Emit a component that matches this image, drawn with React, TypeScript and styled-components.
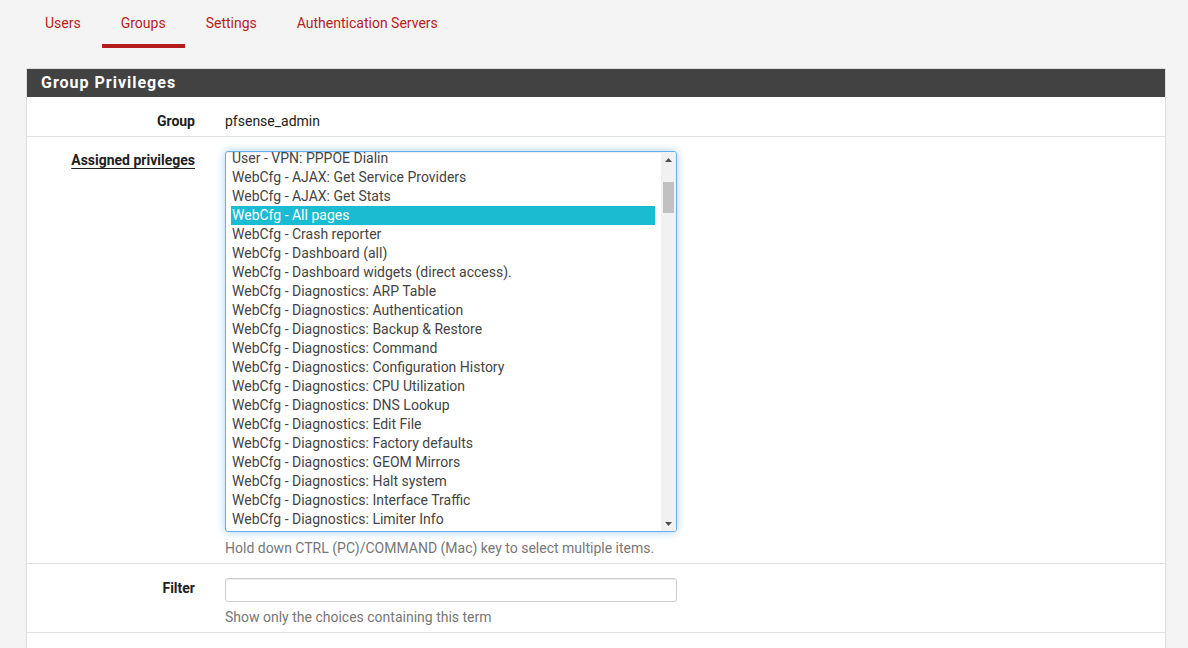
import React from "react";
import styled, { createGlobalStyle } from "styled-components";

const Global = createGlobalStyle`
  html, body { margin: 0; padding: 0; background: #f4f4f4; }
  body { font-family: Roboto, "Liberation Sans", sans-serif; font-size: 14px; color: #212121; }
  * { box-sizing: border-box; }
`;

const Page = styled.div`
  padding: 0 22px 0 26px;
  width: 1188px;
  height: 648px;
  overflow: hidden;
`;

const Tabs = styled.ul`
  display: flex;
  list-style: none;
  margin: 0;
  padding: 0;
  gap: 2px;
`;

const Tab = styled.li<{ $active?: boolean }>`
  padding: 13px 19px 0;
  height: 48px;
  line-height: 20px;
  color: #b71c1c;
  font-size: 14px;
  border-bottom: 4px solid ${(p) => (p.$active ? "#b71c1c" : "transparent")};
`;

const Panel = styled.section`
  margin-top: 20px;
  width: 1140px;
  background: #fff;
  border: 1px solid #dddddd;
  padding-bottom: 40px;
`;

const PanelHeading = styled.h2`
  margin: 0;
  height: 28px;
  background: #424242;
  color: #fff;
  font-size: 16px;
  font-weight: 700;
  letter-spacing: 1px;
  line-height: 28px;
  padding-left: 14px;
`;

const Row = styled.div`
  display: grid;
  grid-template-columns: 168px 452px;
  column-gap: 30px;
  padding: 14px 0 5px;
  border-bottom: 1px solid #e0e0e0;
`;

const Label = styled.div<{ $underline?: boolean }>`
  text-align: right;
  font-weight: 700;
  line-height: 20px;
  color: #212121;
  text-decoration: ${(p) => (p.$underline ? "underline" : "none")};
  text-underline-offset: 3px;
  margin-top: ${(p) => (p.$underline ? "-1px" : "0")};
`;

const Value = styled.div`
  line-height: 20px;
  color: #212121;
`;

const Help = styled.div<{ $gap: number }>`
  margin-top: ${(p) => p.$gap}px;
  line-height: 20px;
  color: #777;
`;

const ListBox = styled.div`
  display: flex;
  height: 381px;
  border: 1px solid #66afe9;
  border-radius: 3px;
  box-shadow: inset 0 1px 1px rgba(0, 0, 0, 0.075), 0 0 8px rgba(102, 175, 233, 0.6);
  overflow: hidden;
  background: #fff;
`;

const Options = styled.div`
  flex: 1;
  overflow: hidden;
  padding: 0 6px 0 5px;
`;

const OptionsInner = styled.div`
  margin-top: -3px;
`;

const Option = styled.div<{ $selected?: boolean }>`
  height: 19px;
  line-height: 19px;
  padding-left: 1px;
  white-space: nowrap;
  color: ${(p) => (p.$selected ? "#fff" : "#444")};
  background: ${(p) => (p.$selected ? "#1bbbd2" : "transparent")};
`;

const ScrollBar = styled.div`
  width: 15px;
  background: #f1f1f1;
  display: flex;
  flex-direction: column;
`;

const ArrowBtn = styled.div`
  height: 15px;
  display: flex;
  align-items: center;
  justify-content: center;
`;

const Track = styled.div`
  flex: 1;
  padding: 15px 2px 0;
`;

const Thumb = styled.div`
  height: 31px;
  background: #c1c1c1;
`;

const FilterInput = styled.input`
  display: block;
  width: 452px;
  height: 24px;
  border: 1px solid #ccc;
  border-radius: 3px;
  background: #fff;
  box-shadow: inset 0 1px 1px rgba(0, 0, 0, 0.075);
  outline: none;
  font: inherit;
`;

const options = [
  "User - VPN: PPPOE Dialin",
  "WebCfg - AJAX: Get Service Providers",
  "WebCfg - AJAX: Get Stats",
  "WebCfg - All pages",
  "WebCfg - Crash reporter",
  "WebCfg - Dashboard (all)",
  "WebCfg - Dashboard widgets (direct access).",
  "WebCfg - Diagnostics: ARP Table",
  "WebCfg - Diagnostics: Authentication",
  "WebCfg - Diagnostics: Backup & Restore",
  "WebCfg - Diagnostics: Command",
  "WebCfg - Diagnostics: Configuration History",
  "WebCfg - Diagnostics: CPU Utilization",
  "WebCfg - Diagnostics: DNS Lookup",
  "WebCfg - Diagnostics: Edit File",
  "WebCfg - Diagnostics: Factory defaults",
  "WebCfg - Diagnostics: GEOM Mirrors",
  "WebCfg - Diagnostics: Halt system",
  "WebCfg - Diagnostics: Interface Traffic",
  "WebCfg - Diagnostics: Limiter Info",
];

const Arrow = ({ up }: { up?: boolean }) => (
  <svg width="7" height="4" viewBox="0 0 7 4">
    <path d={up ? "M0 4 L3.5 0 L7 4 Z" : "M0 0 L7 0 L3.5 4 Z"} fill="#505050" />
  </svg>
);

export default function App() {
  return (
    <>
      <Global />
      <Page>
        <Tabs>
          <Tab>Users</Tab>
          <Tab $active>Groups</Tab>
          <Tab>Settings</Tab>
          <Tab>Authentication Servers</Tab>
        </Tabs>
        <Panel>
          <PanelHeading>Group Privileges</PanelHeading>
          <Row>
            <Label>Group</Label>
            <Value>pfsense_admin</Value>
          </Row>
          <Row>
            <Label $underline>Assigned privileges</Label>
            <div>
              <ListBox>
                <Options>
                  <OptionsInner>
                    {options.map((o) => (
                      <Option key={o} $selected={o === "WebCfg - All pages"}>
                        {o}
                      </Option>
                    ))}
                  </OptionsInner>
                </Options>
                <ScrollBar>
                  <ArrowBtn>
                    <Arrow up />
                  </ArrowBtn>
                  <Track>
                    <Thumb />
                  </Track>
                  <ArrowBtn>
                    <Arrow />
                  </ArrowBtn>
                </ScrollBar>
              </ListBox>
              <Help $gap={6}>Hold down CTRL (PC)/COMMAND (Mac) key to select multiple items.</Help>
            </div>
          </Row>
          <Row>
            <Label>Filter</Label>
            <div>
              <FilterInput type="text" />
              <Help $gap={5}>Show only the choices containing this term</Help>
            </div>
          </Row>
        </Panel>
      </Page>
    </>
  );
}
